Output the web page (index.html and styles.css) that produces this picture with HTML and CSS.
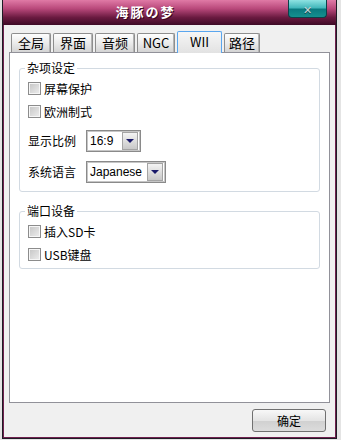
FILE: index.html
```html
<!DOCTYPE html>
<html lang="zh">
<head>
  <meta charset="UTF-8">
  <title>海豚の梦</title>
  <link rel="stylesheet" href="styles.css">
</head>
<body>

  <div class="window">
    <div class="titlebar">
      <div class="title">海豚の梦</div>
      <div class="close">✕</div>
    </div>

    <div class="frame">
      <div class="tabs">
        <div class="tab w40">全局</div>
        <div class="tab w40">界面</div>
        <div class="tab w40">音频</div>
        <div class="tab w38">NGC</div>
        <div class="tab active">WII</div>
        <div class="tab w36">路径</div>
      </div>

      <div class="panel">
        <div class="group misc">
          <div class="legend">杂项设定</div>
          <label class="row check"><span class="box"></span>屏幕保护</label>
          <label class="row check"><span class="box"></span>欧洲制式</label>
          <div class="row field first-field">
            <span class="field-label">显示比例</span>
            <div class="combo small"><span class="value">16:9</span><span class="arrow"></span></div>
          </div>
          <div class="row field">
            <span class="field-label">系统语言</span>
            <div class="combo wide"><span class="value">Japanese</span><span class="arrow"></span></div>
          </div>
        </div>

        <div class="group ports">
          <div class="legend">端口设备</div>
          <label class="row check first-check"><span class="box"></span>插入SD卡</label>
          <label class="row check"><span class="box"></span>USB键盘</label>
        </div>
      </div>

      <div class="actions">
        <button class="btn">确定</button>
      </div>
    </div>
  </div>

</body>
</html>
```

FILE: styles.css
```css
* {
  box-sizing: border-box;
}
body {
  margin: 0;
  background: #e4e4e4;
  font-family: "Noto Sans CJK SC", "Liberation Sans", sans-serif;
  font-size: 12px;
  color: #000;
}
.window {
  margin-left: 2px;
  width: 335px;
  height: 439px;
  border: 1px solid #1e1a24;
  border-top: none;
}
.titlebar {
  height: 25px;
  display: flex;
  background: linear-gradient(#e07aa6, #b8487a 35%, #6a1a40 70%, #3e0a26);
}
.title {
  flex: 1;
  text-align: center;
  line-height: 24px;
  font-size: 13px;
  font-weight: bold;
  letter-spacing: 2px;
  color: #fff;
  text-shadow: 1px 1px 0 #3a0820;
}
.close {
  width: 39px;
  height: 18px;
  margin-right: 9px;
  padding-top: 3px;
  display: flex;
  align-items: center;
  justify-content: center;
  border: 1px solid #0c4048;
  border-top: none;
  border-radius: 0 0 4px 4px;
  background: linear-gradient(#8ee2e2, #44b8bc 45%, #0b7a80 55%, #14908f);
  color: #c8d2d2;
  font-family: "DejaVu Sans", sans-serif;
  font-size: 11px;
  font-weight: bold;
  text-shadow: 0 1px 0 #0a4a50;
}
.frame {
  height: 413px;
  border: 1px solid #70204e;
  border-top: none;
  background: #f0f0f0;
  padding: 6px 5px 0 5px;
}
.tabs {
  height: 21px;
  display: flex;
  align-items: flex-end;
  gap: 2px;
  padding-left: 2px;
}
.tab {
  height: 19px;
  border: 1px solid #8e8e8e;
  border-bottom: none;
  border-radius: 2px 2px 0 0;
  background: linear-gradient(#fefefe, #ebebeb 50%, #d4d4d4);
  box-shadow: inset -1px 0 #b4b4b4;
  text-align: center;
  line-height: 18px;
  font-size: 13px;
}
.w40 { width: 40px; }
.w38 { width: 38px; }
.w36 { width: 36px; }
.tab.active {
  position: relative;
  z-index: 1;
  width: 45px;
  height: 22px;
  margin-bottom: -1px;
  border-color: #5aa6ee;
  background: linear-gradient(#f6f6f6, #e2e2e2);
  box-shadow: none;
  line-height: 19px;
}
.panel {
  height: 351px;
  border: 1px solid #919199;
  background: #fff;
  padding: 15px 9px 0 9px;
}
.group {
  border: 1px solid #d2dae2;
  border-radius: 3px;
  padding: 0 8px;
  line-height: 14px;
}
.misc {
  padding-bottom: 4px;
}
.ports {
  margin-top: 19px;
  padding-bottom: 2px;
}
.legend {
  display: table;
  margin: -8px 0 2px -3px;
  padding: 0 2px;
  background: #fff;
}
.row {
  display: flex;
  align-items: center;
}
.check {
  height: 23px;
}
.first-check {
  margin-top: 2px;
}
.box {
  width: 13px;
  height: 13px;
  margin-right: 3px;
  border: 1px solid #8c8c8c;
  background: linear-gradient(135deg, #c4c4c4, #eeeeee);
  box-shadow: inset 0 0 0 1px #f6f6f6;
}
.field {
  height: 31px;
}
.first-field {
  margin-top: 2px;
}
.field-label {
  width: 58px;
}
.combo {
  height: 22px;
  display: flex;
  align-items: center;
  justify-content: space-between;
  border: 1px solid #8a8a8a;
  box-shadow: inset 0 0 0 1px #c6c6c6;
  padding: 1px 2px 1px 3px;
  font-family: "Liberation Sans", sans-serif;
  font-size: 12px;
}
.small { width: 55px; }
.wide { width: 80px; }
.arrow {
  width: 16px;
  height: 18px;
  border: 1px solid #a4a4a4;
  background: linear-gradient(#f4f4f4, #c8c8c8);
  display: flex;
  align-items: center;
  justify-content: center;
}
.arrow::after {
  content: "";
  border-left: 4px solid transparent;
  border-right: 4px solid transparent;
  border-top: 4px solid #1a1a6a;
}
.actions {
  display: flex;
  justify-content: flex-end;
  padding: 6px 4px 0 0;
}
.btn {
  width: 74px;
  height: 23px;
  border: 1px solid #707070;
  border-radius: 3px;
  background: linear-gradient(#f8f8f8, #e4e4e4 50%, #d0d0d0 51%, #dcdcdc);
  font-family: "Noto Sans CJK SC", sans-serif;
  font-size: 12px;
  padding: 0;
}
```
